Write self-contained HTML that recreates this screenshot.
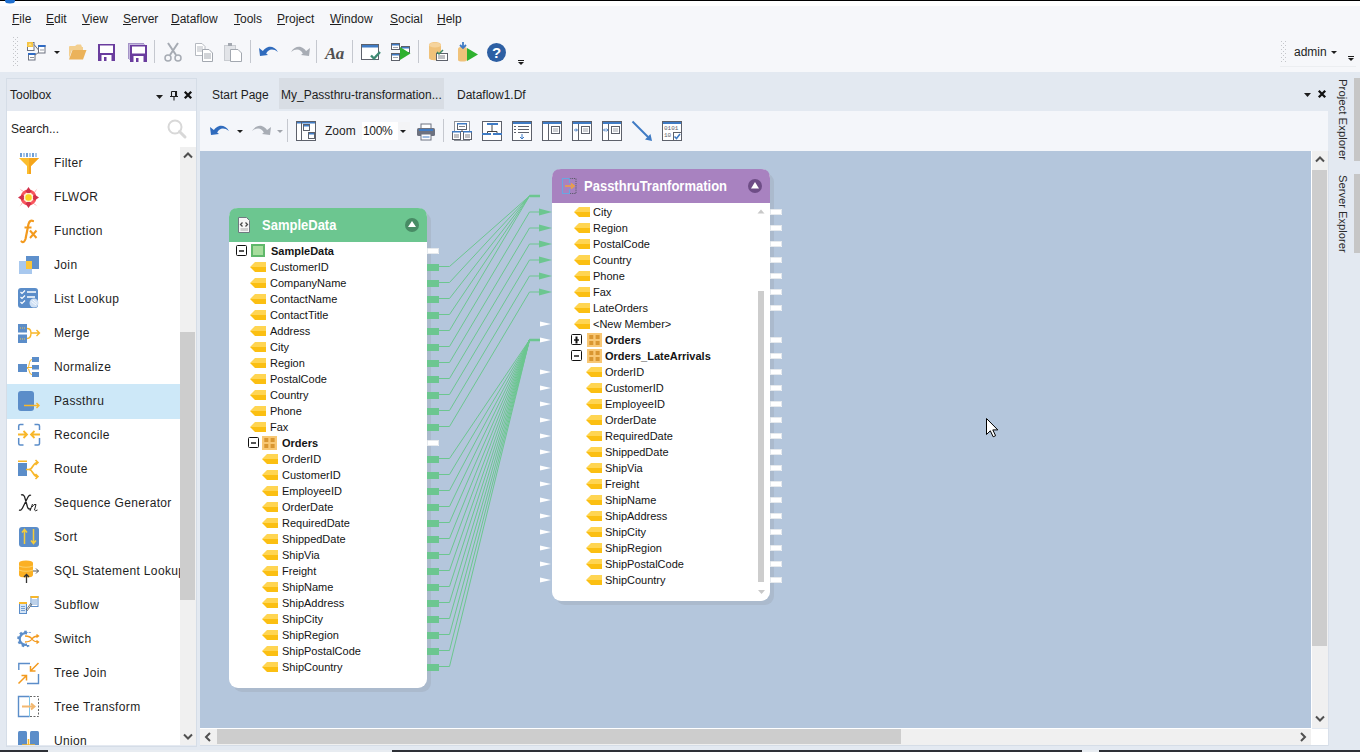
<!DOCTYPE html><html><head><meta charset="utf-8"><style>
*{margin:0;padding:0;box-sizing:border-box}
html,body{width:1360px;height:752px;overflow:hidden;background:#e3e9f1;font-family:"Liberation Sans",sans-serif;font-size:12px;color:#1e1e1e}
.a{position:absolute}
.mi{position:absolute;top:12px;font-size:12px;color:#1e1e1e;white-space:nowrap}
.mi u{text-decoration:underline;text-underline-offset:1px}
.sep{position:absolute;width:1px;background:#c5c8cf}
svg{position:absolute;overflow:visible}
.it{position:absolute;left:7px;width:173px;height:34px}
.it .t{position:absolute;left:47px;top:11px;font-size:12px;color:#1e1e1e;white-space:nowrap;letter-spacing:0.35px}
.f{position:absolute;white-space:nowrap;font-size:11px;line-height:16px;height:16px;color:#141414}
.fb{font-weight:bold}
</style></head><body>
<div class="a" style="left:0;top:0;width:1360px;height:72px;background:#f6f7fa"></div>
<div class="a" style="left:0;top:0;width:1360px;height:1px;background:#000"></div>
<div class="a" style="left:0;top:1px;width:1360px;height:5px;background:#fff"></div>
<svg style="left:5px;top:1px" width="12" height="4"><ellipse cx="5" cy="0" rx="5" ry="2.5" fill="#1f6fd0"/></svg>
<div class="mi" style="left:12px"><u>F</u>ile</div>
<div class="mi" style="left:46px"><u>E</u>dit</div>
<div class="mi" style="left:82px"><u>V</u>iew</div>
<div class="mi" style="left:123px"><u>S</u>erver</div>
<div class="mi" style="left:171px"><u>D</u>ataflow</div>
<div class="mi" style="left:234px"><u>T</u>ools</div>
<div class="mi" style="left:277px"><u>P</u>roject</div>
<div class="mi" style="left:330px"><u>W</u>indow</div>
<div class="mi" style="left:390px"><u>S</u>ocial</div>
<div class="mi" style="left:437px"><u>H</u>elp</div>
<svg style="left:13px;top:37px" width="5" height="32"><rect x="0" y="0" width="1" height="1" fill="#c4c6ca"/><rect x="4" y="0" width="1" height="1" fill="#c4c6ca"/><rect x="2" y="2" width="1" height="1" fill="#c4c6ca"/><rect x="0" y="4" width="1" height="1" fill="#c4c6ca"/><rect x="4" y="4" width="1" height="1" fill="#c4c6ca"/><rect x="2" y="6" width="1" height="1" fill="#c4c6ca"/><rect x="0" y="8" width="1" height="1" fill="#c4c6ca"/><rect x="4" y="8" width="1" height="1" fill="#c4c6ca"/><rect x="2" y="10" width="1" height="1" fill="#c4c6ca"/><rect x="0" y="12" width="1" height="1" fill="#c4c6ca"/><rect x="4" y="12" width="1" height="1" fill="#c4c6ca"/><rect x="2" y="14" width="1" height="1" fill="#c4c6ca"/><rect x="0" y="16" width="1" height="1" fill="#c4c6ca"/><rect x="4" y="16" width="1" height="1" fill="#c4c6ca"/><rect x="2" y="18" width="1" height="1" fill="#c4c6ca"/><rect x="0" y="20" width="1" height="1" fill="#c4c6ca"/><rect x="4" y="20" width="1" height="1" fill="#c4c6ca"/><rect x="2" y="22" width="1" height="1" fill="#c4c6ca"/><rect x="0" y="24" width="1" height="1" fill="#c4c6ca"/><rect x="4" y="24" width="1" height="1" fill="#c4c6ca"/><rect x="2" y="26" width="1" height="1" fill="#c4c6ca"/><rect x="0" y="28" width="1" height="1" fill="#c4c6ca"/><rect x="4" y="28" width="1" height="1" fill="#c4c6ca"/></svg>
<svg style="left:26px;top:41px" width="21" height="21" viewBox="0 0 21 21">
<rect x="1.5" y="1.5" width="6.5" height="8" fill="#fff" stroke="#6d7280"/><rect x="1" y="1" width="6" height="5" fill="#f6c443"/><path d="M2 4.5L4 2L6 4.5Z" fill="#fbe38a"/>
<rect x="12.5" y="4.5" width="6.5" height="7.5" fill="#fff" stroke="#6d7280"/><rect x="12" y="4" width="7.5" height="2" fill="#2f6bc4"/><rect x="14" y="8" width="4" height="2" fill="#c9ccd2"/>
<rect x="2.5" y="12.5" width="6.5" height="6.5" fill="#fff" stroke="#6d7280"/><rect x="2" y="12" width="7.5" height="2" fill="#2f6bc4"/><path d="M4 16.5h4" stroke="#8a8e96"/>
<path d="M8 3.5 L12.5 9 M12.5 11.5 L9 14" stroke="#6d7280" fill="none"/></svg>
<svg style="left:54px;top:51px" width="6" height="4"><path d="M0 0H6L3 3Z" fill="#1e1e1e"/></svg>
<svg style="left:68px;top:44px" width="19" height="17" viewBox="0 0 19 17"><path d="M1 3 Q1 2 2 2 H7 L9 0.5 H13 L14 3 H15 V6 H4 L1 14 Z" fill="#f3cf8f"/><path d="M4.5 6 H18.5 L15 15.5 H1 Z" fill="#ebb25a"/></svg>
<svg style="left:98px;top:44px" width="18" height="18" viewBox="0 0 18 18"><rect x="0" y="0" width="17" height="17" fill="#6a3d9e"/><rect x="2" y="1.5" width="13" height="7.5" fill="#fff"/><rect x="3.5" y="11" width="10" height="6" fill="#fff"/><rect x="6" y="13" width="2.5" height="4" fill="#6a3d9e"/></svg>
<svg style="left:128px;top:43px" width="19" height="19" viewBox="0 0 19 19"><rect x="0" y="0" width="16" height="16" fill="#a594c8"/><rect x="1" y="1" width="16" height="16" fill="#c5b9de"/><rect x="2" y="2" width="17" height="17" fill="#6a3d9e"/><rect x="4" y="3.5" width="13" height="7" fill="#fff"/><rect x="5.5" y="13" width="10" height="6" fill="#fff"/><rect x="8" y="15" width="2.5" height="4" fill="#6a3d9e"/></svg>
<div class="sep" style="left:154px;top:40px;height:23px"></div>
<svg style="left:164px;top:42px" width="18" height="20" viewBox="0 0 18 20"><path d="M4 1 L12 13 M14 1 L6 13" stroke="#a6abb3" stroke-width="2" fill="none"/><circle cx="4" cy="16" r="3" fill="none" stroke="#a6abb3" stroke-width="1.5"/><circle cx="14" cy="16" r="3" fill="none" stroke="#a6abb3" stroke-width="1.5"/></svg>
<svg style="left:195px;top:43px" width="18" height="19" viewBox="0 0 18 19"><path d="M0.5 0.5 H7 L10 3.5 V12.5 H0.5 Z" fill="#fff" stroke="#b5b9c0"/><path d="M2 4h6M2 6h6M2 8h6" stroke="#b5b9c0"/><path d="M7.5 6.5 H14 L17.5 10 V18.5 H7.5 Z" fill="#fff" stroke="#a3a8b0"/><path d="M9 11h7M9 13h7M9 15h7" stroke="#a3a8b0"/></svg>
<svg style="left:224px;top:43px" width="18" height="19" viewBox="0 0 18 19"><rect x="0.5" y="2.5" width="11" height="15" fill="#e2e4e8" stroke="#c9ccd1"/><rect x="4" y="0" width="4" height="3" fill="#a3a8b0"/><path d="M6.5 6.5 H14 L17.5 10 V18.5 H6.5 Z" fill="#fff" stroke="#a3a8b0"/></svg>
<div class="sep" style="left:250px;top:40px;height:23px"></div>
<svg style="left:259px;top:44px" width="20" height="13" viewBox="0 0 20 13"><path d="M3 9 C6 2 14 0 19 8 C14 4 9 5 7 10 Z" fill="#2f6bbd"/><path d="M0 4 L9 11 L1 12 Z" fill="#2f6bbd"/></svg>
<svg style="left:290px;top:44px" width="20" height="13" viewBox="0 0 20 13"><path d="M17 9 C14 2 6 0 1 8 C6 4 11 5 13 10 Z" fill="#a8adb5"/><path d="M20 4 L11 11 L19 12 Z" fill="#a8adb5"/></svg>
<div class="sep" style="left:316px;top:40px;height:23px"></div>
<div class="a" style="left:325px;top:44px;font-family:'Liberation Serif',serif;font-style:italic;font-weight:bold;font-size:17px;color:#505050;letter-spacing:-0.5px">Aa</div>
<div class="sep" style="left:352px;top:40px;height:23px"></div>
<svg style="left:361px;top:44px" width="20" height="17" viewBox="0 0 20 17"><rect x="0.5" y="0.5" width="17" height="15" fill="#fff" stroke="#5d616b"/><rect x="1" y="1" width="16" height="2.5" fill="#3f7bc4"/><path d="M10 11.5 L13 14.5 L19 8" stroke="#3d8a72" stroke-width="2.4" fill="none"/></svg>
<svg style="left:391px;top:43px" width="20" height="18" viewBox="0 0 20 18"><rect x="0.5" y="0.5" width="8" height="6" fill="#fff" stroke="#5d616b"/><rect x="1" y="1" width="7" height="1.5" fill="#3f7bc4"/><path d="M2 4.5h5" stroke="#8a8e96" stroke-width="0.8"/><rect x="10.5" y="3.5" width="8" height="6" fill="#fff" stroke="#5d616b"/><rect x="11" y="4" width="7" height="1.5" fill="#3f7bc4"/><rect x="0.5" y="10.5" width="8" height="7" fill="#fff" stroke="#5d616b"/><rect x="1" y="11" width="7" height="1.5" fill="#3f7bc4"/><path d="M2 14.5h5" stroke="#8a8e96" stroke-width="0.8"/><path d="M9 4 L19.5 10.5 L9 17 Z" fill="#2fb12f"/></svg>
<div class="sep" style="left:418px;top:40px;height:23px"></div>
<svg style="left:429px;top:42px" width="19" height="20" viewBox="0 0 19 20"><path d="M0 3 C0 -1 12 -1 12 3 V16 C12 19 0 19 0 16 Z" fill="#f0c27a"/><ellipse cx="6" cy="3" rx="6" ry="2.5" fill="#f6d49d"/><rect x="7.5" y="11.5" width="11" height="7" fill="#fff" stroke="#5d616b"/><path d="M9 14h7M9 16h7" stroke="#5d616b" stroke-width="0.8"/><path d="M8 10 L10 12 L14 8" stroke="#3d8a66" stroke-width="1.5" fill="none"/></svg>
<svg style="left:458px;top:42px" width="20" height="20" viewBox="0 0 20 20"><path d="M0 7 C0 4 9 4 9 7 V18 C9 20 0 20 0 18 Z" fill="#f0c27a"/><path d="M5 0 V5 M2 3 L5 6 L8 3" stroke="#3f7bc4" stroke-width="1.8" fill="none"/><path d="M9 6 L20 12.5 L9 19 Z" fill="#2fb12f"/></svg>
<svg style="left:487px;top:43px" width="19" height="19" viewBox="0 0 19 19"><circle cx="9.5" cy="9.5" r="9.5" fill="#2d5fa3"/><text x="9.5" y="15" text-anchor="middle" font-family="Liberation Sans" font-weight="bold" font-size="15" fill="#fff">?</text></svg>
<svg style="left:518px;top:60px" width="7" height="7"><rect x="0" y="0" width="6" height="1" fill="#1e1e1e"/><path d="M0 2H6L3 5Z" fill="#1e1e1e"/></svg>
<svg style="left:1281px;top:41px" width="5" height="24"><rect x="0" y="0" width="1" height="1" fill="#c4c6ca"/><rect x="4" y="0" width="1" height="1" fill="#c4c6ca"/><rect x="2" y="2" width="1" height="1" fill="#c4c6ca"/><rect x="0" y="4" width="1" height="1" fill="#c4c6ca"/><rect x="4" y="4" width="1" height="1" fill="#c4c6ca"/><rect x="2" y="6" width="1" height="1" fill="#c4c6ca"/><rect x="0" y="8" width="1" height="1" fill="#c4c6ca"/><rect x="4" y="8" width="1" height="1" fill="#c4c6ca"/><rect x="2" y="10" width="1" height="1" fill="#c4c6ca"/><rect x="0" y="12" width="1" height="1" fill="#c4c6ca"/><rect x="4" y="12" width="1" height="1" fill="#c4c6ca"/><rect x="2" y="14" width="1" height="1" fill="#c4c6ca"/><rect x="0" y="16" width="1" height="1" fill="#c4c6ca"/><rect x="4" y="16" width="1" height="1" fill="#c4c6ca"/><rect x="2" y="18" width="1" height="1" fill="#c4c6ca"/><rect x="0" y="20" width="1" height="1" fill="#c4c6ca"/><rect x="4" y="20" width="1" height="1" fill="#c4c6ca"/></svg>
<div class="a" style="left:1280px;top:66px;width:76px;height:1px;background:#eceef1"></div>
<div class="a" style="left:1294px;top:45px;font-size:12px;color:#1e1e1e">admin</div>
<svg style="left:1331px;top:51px" width="6" height="4"><path d="M0 0H6L3 3Z" fill="#1e1e1e"/></svg>
<svg style="left:1348px;top:56px" width="7" height="7"><rect x="0" y="0" width="6" height="1" fill="#1e1e1e"/><path d="M0 2H6L3 5Z" fill="#1e1e1e"/></svg>
<div class="a" style="left:6px;top:78px;width:191px;height:669px;border:1px solid #d5dde7;background:#e4e9f1"></div>
<div class="a" style="left:10px;top:88px;font-size:12px;color:#1e1e1e">Toolbox</div>
<svg style="left:156px;top:95px" width="8" height="5"><path d="M0 0H7L3.5 4Z" fill="#1e1e1e"/></svg>
<svg style="left:170px;top:91px" width="8" height="10"><path d="M1.5 0.5H6.5V5.5M1.5 0.5V5.5M0 5.5H8M4 5.5V9.5" stroke="#1e1e1e" stroke-width="1.1" fill="none"/><rect x="5" y="0.5" width="1.5" height="5" fill="#1e1e1e"/></svg>
<svg style="left:184px;top:91px" width="8" height="8"><path d="M0.8 0.8L7.2 7.2M7.2 0.8L0.8 7.2" stroke="#111" stroke-width="2.3"/></svg>
<div class="a" style="left:7px;top:111px;width:189px;height:36px;background:#fff"></div>
<div class="a" style="left:11px;top:122px;font-size:12px;color:#1e1e1e">Search...</div>
<svg style="left:166px;top:118px" width="22" height="22"><circle cx="9" cy="9" r="6.5" fill="none" stroke="#d8d8d8" stroke-width="2"/><path d="M13.5 13.5L19 19" stroke="#d8d8d8" stroke-width="3" stroke-linecap="round"/></svg>
<div class="a" style="left:7px;top:147px;width:173px;height:598px;background:#fff;overflow:hidden">
<div class="it" style="left:0;top:-2px"><div class="t">Filter</div></div>
<div class="it" style="left:0;top:32px"><div class="t">FLWOR</div></div>
<div class="it" style="left:0;top:66px"><div class="t">Function</div></div>
<div class="it" style="left:0;top:100px"><div class="t">Join</div></div>
<div class="it" style="left:0;top:134px"><div class="t">List Lookup</div></div>
<div class="it" style="left:0;top:168px"><div class="t">Merge</div></div>
<div class="it" style="left:0;top:202px"><div class="t">Normalize</div></div>
<div class="a" style="left:0;top:237px;width:173px;height:35px;background:#cde8f8"></div>
<div class="it" style="left:0;top:236px"><div class="t">Passthru</div></div>
<div class="it" style="left:0;top:270px"><div class="t">Reconcile</div></div>
<div class="it" style="left:0;top:304px"><div class="t">Route</div></div>
<div class="it" style="left:0;top:338px"><div class="t">Sequence Generator</div></div>
<div class="it" style="left:0;top:372px"><div class="t">Sort</div></div>
<div class="it" style="left:0;top:406px"><div class="t">SQL Statement Lookup</div></div>
<div class="it" style="left:0;top:440px"><div class="t">Subflow</div></div>
<div class="it" style="left:0;top:474px"><div class="t">Switch</div></div>
<div class="it" style="left:0;top:508px"><div class="t">Tree Join</div></div>
<div class="it" style="left:0;top:542px"><div class="t">Tree Transform</div></div>
<div class="it" style="left:0;top:576px"><div class="t">Union</div></div>
<svg style="left:-7px;top:-147px" width="200" height="752"><rect x="20" y="153" width="18" height="4" fill="#fff"/><rect x="20" y="153" width="2" height="4" fill="#6f9fd6"/><rect x="23" y="153" width="2" height="4" fill="#a7c7ea"/><rect x="26" y="153" width="2" height="4" fill="#6f9fd6"/><rect x="29" y="153" width="2" height="4" fill="#a7c7ea"/><rect x="32" y="153" width="2" height="4" fill="#6f9fd6"/><rect x="35" y="153" width="2" height="4" fill="#a7c7ea"/><path d="M19 158H39L31 166V174H27V166Z" fill="#fbbd2e"/><path d="M29 158H39L31 166V174H29Z" fill="#f5a51c"/><g transform="translate(28.5,197.5)"><path d="M-6.5 -6.5L-9 -9L-3 -5ZM6.5 -6.5L9 -9L5 -3ZM6.5 6.5L9 9L3 5ZM-6.5 6.5L-9 9L-5 3Z" fill="#f4a0a0"/><circle r="6.5" fill="none" stroke="#f8575d" stroke-width="3"/><path d="M0 -10.5L3 -6L0 -3.5L-3 -6ZM0 10.5L3 6L0 3.5L-3 6ZM-10.5 0L-6 3L-3.5 0L-6 -3ZM10.5 0L6 3L3.5 0L6 -3Z" fill="#d2304a"/><circle r="4.6" fill="#fdf1c8"/><circle r="3.2" fill="#fbd321"/></g><path d="M21.5 241.5Q24 243.5 25.5 239L28.5 224Q30 219.5 33 221" stroke="#f39a1e" stroke-width="2.2" fill="none" stroke-linecap="round"/><path d="M24.5 227.5H31.5" stroke="#f39a1e" stroke-width="2"/><path d="M30 230.5L36.5 238M36.5 230.5L30 238" stroke="#f39a1e" stroke-width="2"/><rect x="26" y="256" width="13" height="13" fill="#5e90cc"/><rect x="19" y="261" width="13" height="13" fill="#a8c8ee"/><rect x="26" y="261" width="6" height="8" fill="#fac53a"/><rect x="18" y="288" width="20" height="20" rx="3" fill="#5b8dc9"/><path d="M20.5 292L22 293.5L25 290.5M20.5 297L22 298.5L25 295.5M20.5 302L22 303.5L25 300.5" stroke="#fff" stroke-width="1.2" fill="none"/><path d="M27 292H36M27 297H35" stroke="#fff" stroke-width="1.4"/><circle cx="34" cy="303" r="4.5" fill="#cfe0f4"/><path d="M31.5 301.5L36 305M33 300L37 303.5" stroke="#fff" stroke-width="0.8"/><rect x="18" y="324" width="9" height="8.5" fill="#5b8dc9"/><rect x="18" y="334.5" width="9" height="8.5" fill="#5b8dc9"/><path d="M20 328h5M20 339h5" stroke="#f3c24a" stroke-width="1" stroke-dasharray="1 1"/><path d="M27 328.5Q31 328.5 31 333Q31 338.5 27 338.5M31 333H39.5M36.5 330L39.5 333L36.5 336" stroke="#f8b72a" stroke-width="1.4" fill="none"/><rect x="18" y="364" width="9" height="8" fill="#5b8dc9"/><rect x="32" y="357" width="7" height="5" fill="#5b8dc9"/><rect x="32" y="365" width="7" height="4.5" fill="#5b8dc9"/><rect x="32" y="372" width="7" height="5" fill="#5b8dc9"/><path d="M27 368Q29 368 29.5 362.5Q30 359.5 32 359.5M27 367.5H32M27 368Q29 368 29.5 372Q30 374.5 32 374.5" stroke="#f8b72a" stroke-width="1" fill="none"/><rect x="18" y="391" width="16" height="20" rx="3" fill="#5b8dc9"/><path d="M24 405.5H39M36.5 403L39 405.5L36.5 408" stroke="#f8b72a" stroke-width="1.4" fill="none"/><path d="M18.7 430V426Q18.7 424.5 20.2 424.5H23.5M34.5 424.5H38Q39.5 424.5 39.5 426V430M39.5 438V443.5Q39.5 445 38 445H34.5M23.5 445H20.2Q18.7 445 18.7 443.5V438" stroke="#5b8dc9" stroke-width="1.5" fill="none"/><path d="M18 434.5H26.5M23.5 431L27 434.5L23.5 438M40 434.5H31.5M34.5 431L31 434.5L34.5 438" stroke="#f8b72a" stroke-width="1.8" fill="none"/><rect x="18" y="463" width="9" height="13" fill="#5b8dc9"/><rect x="18" y="460.5" width="9" height="1.5" fill="#f8b72a"/><path d="M26 469.5H29Q31 469.5 33 466Q35 462.5 37.5 462.5M29 469.5Q31 469.5 33 473Q35 476.5 37.5 476.5M35.5 460L38 462.5L35.5 465M35.5 474L38 476.5L35.5 479" stroke="#f8b72a" stroke-width="1.6" fill="none"/><path d="M19 510Q21 511 22.5 508L28 497Q29.5 494.5 31 495.5M21 495Q23 494 24.5 496.5L27.5 507Q28.5 510 31 508.5" stroke="#222" stroke-width="1.3" fill="none"/><path d="M30 511L32.5 504M32 507Q34 503.5 36 504.5L34.5 510Q35 511.5 37.5 510" stroke="#222" stroke-width="1" fill="none"/><rect x="19" y="527" width="20" height="20" rx="3" fill="#5b8dc9"/><path d="M24.5 544V530M22 532.5L24.5 529.5L27 532.5M33.5 529V543M31 540.5L33.5 543.5L36 540.5" stroke="#f5cc3a" stroke-width="1.5" fill="none"/><path d="M19 563Q19 560.5 26 560.5Q33 560.5 33 563V575Q33 577.5 26 577.5Q19 577.5 19 575Z" fill="#fbb024"/><path d="M19 566Q26 568.5 33 566M19 570Q26 572.5 33 570" stroke="#fbd06a" stroke-width="1.2" fill="none"/><path d="M26.5 583V574.5M24 577L26.5 574.5L29 577" stroke="#333" stroke-width="1.3" fill="none"/><path d="M33 571H38.5M36 568.5L38.5 571L36 573.5" stroke="#555" stroke-width="1" fill="none"/><rect x="19.5" y="602.5" width="7" height="11" fill="#d6e5f5" stroke="#5b8dc9"/><rect x="19" y="602" width="8" height="2" fill="#f8b72a"/><path d="M21 606.5h4M21 608.5h4M21 610.5h4" stroke="#5b8dc9" stroke-width="0.8"/><rect x="31" y="596.5" width="7" height="10" fill="#fff" stroke="#5b8dc9"/><rect x="30.5" y="596" width="8" height="2" fill="#f8b72a"/><path d="M32 600h5M32 602h5M32 604h5" stroke="#5b8dc9" stroke-width="0.8"/><path d="M26 610L31 603M27 611L32 604" stroke="#444" stroke-width="0.7"/><g transform="translate(25.5,639)"><circle r="5.8" fill="none" stroke="#5b8dc9" stroke-width="2.2"/><rect x="-1.3" y="-8.3" width="2.6" height="3" fill="#5b8dc9" transform="rotate(0)"/><rect x="-1.3" y="-8.3" width="2.6" height="3" fill="#5b8dc9" transform="rotate(40)"/><rect x="-1.3" y="-8.3" width="2.6" height="3" fill="#5b8dc9" transform="rotate(80)"/><rect x="-1.3" y="-8.3" width="2.6" height="3" fill="#5b8dc9" transform="rotate(120)"/><rect x="-1.3" y="-8.3" width="2.6" height="3" fill="#5b8dc9" transform="rotate(160)"/><rect x="-1.3" y="-8.3" width="2.6" height="3" fill="#5b8dc9" transform="rotate(200)"/><rect x="-1.3" y="-8.3" width="2.6" height="3" fill="#5b8dc9" transform="rotate(240)"/><rect x="-1.3" y="-8.3" width="2.6" height="3" fill="#5b8dc9" transform="rotate(280)"/><rect x="-1.3" y="-8.3" width="2.6" height="3" fill="#5b8dc9" transform="rotate(320)"/></g><rect x="27" y="633" width="13" height="12" fill="#fff"/><path d="M25 636Q30 636 32 639Q34 642 38.5 642M25 642Q30 642 32 639Q34 636 38.5 636M36.5 634.5L38.5 636L36.5 637.5M36.5 640.5L38.5 642L36.5 643.5" stroke="#f39a1e" stroke-width="1.3" fill="none"/><path d="M18.8 670V663.5H30M38.5 674V683.5H27" stroke="#5b8dc9" stroke-width="1.4" fill="none"/><path d="M38.5 663L31 670.5M30.5 666V671H35.5M18.5 683.5L26 676M21.5 675.5H26.5V680.5" stroke="#f39a1e" stroke-width="1.5" fill="none"/><path d="M29.5 696.5H18.5V716.5H29.5" stroke="#5b8dc9" stroke-width="1.4" fill="none"/><path d="M29.5 696.5V716.5" stroke="#7fc4e8" stroke-width="1"/><path d="M30 696.5H38.5V716.5H30" stroke="#666" stroke-width="1" stroke-dasharray="2 1.5" fill="none"/><path d="M22 706.5H33M31 703.5L34.5 706.5L31 709.5" stroke="#f3b870" stroke-width="2" fill="none"/><rect x="18" y="731" width="9" height="18" rx="1.5" fill="#5b8dc9"/><rect x="30" y="731" width="9" height="18" rx="1.5" fill="#5b8dc9"/><path d="M28.5 739V745M22 745H35" stroke="#f8b72a" stroke-width="1.6"/></svg>
</div>
<div class="a" style="left:180px;top:147px;width:16px;height:598px;background:#f0f0f0"></div>
<div class="a" style="left:180px;top:332px;width:15px;height:268px;background:#cdcdcd"></div>
<svg style="left:183px;top:152px" width="10" height="7"><path d="M1 5.5L5 1.5L9 5.5" stroke="#505050" stroke-width="2" fill="none"/></svg>
<svg style="left:183px;top:733px" width="10" height="7"><path d="M1 1.5L5 5.5L9 1.5" stroke="#505050" stroke-width="2" fill="none"/></svg>
<div class="a" style="left:279px;top:78px;width:165px;height:31px;background:#d8dde4"></div>
<div class="a" style="left:212px;top:88px;font-size:12px;color:#1e1e1e">Start Page</div>
<div class="a" style="left:281px;top:88px;font-size:12px;color:#1e1e1e">My_Passthru-transformation...</div>
<div class="a" style="left:457px;top:88px;font-size:12px;color:#1e1e1e">Dataflow1.Df</div>
<svg style="left:1304px;top:93px" width="8" height="5"><path d="M0 0H7L3.5 4Z" fill="#1e1e1e"/></svg>
<svg style="left:1318px;top:90px" width="8" height="8"><path d="M0.8 0.8L7.2 7.2M7.2 0.8L0.8 7.2" stroke="#111" stroke-width="2.3"/></svg>
<div class="a" style="left:200px;top:111px;width:1128px;height:40px;background:#f4f6fa"></div>
<svg style="left:210px;top:123px" width="20" height="13" viewBox="0 0 20 13"><path d="M3 9 C6 2 14 0 19 8 C14 4 9 5 7 10 Z" fill="#2f6bbd"/><path d="M0 4 L9 11 L1 12 Z" fill="#2f6bbd"/></svg>
<svg style="left:237px;top:130px" width="6" height="4"><path d="M0 0H6L3 3Z" fill="#1e1e1e"/></svg>
<svg style="left:251px;top:123px" width="20" height="13" viewBox="0 0 20 13"><path d="M17 9 C14 2 6 0 1 8 C6 4 11 5 13 10 Z" fill="#a8adb5"/><path d="M20 4 L11 11 L19 12 Z" fill="#a8adb5"/></svg>
<svg style="left:277px;top:130px" width="6" height="4"><path d="M0 0H6L3 3Z" fill="#a0a4ab"/></svg>
<div class="sep" style="left:287px;top:119px;height:23px"></div>
<svg style="left:296px;top:121px" width="20" height="20" viewBox="0 0 20 20"><rect x="0.5" y="0.5" width="19" height="19" fill="#fff" stroke="#5d616b"/><rect x="1" y="1" width="18" height="1.5" fill="#3f7bc4"/><path d="M5.5 1V19" stroke="#5d616b"/><rect x="7.5" y="3.5" width="6" height="6" fill="#fff" stroke="#5d616b"/><rect x="8" y="4" width="5" height="1.5" fill="#3f7bc4"/><rect x="12.5" y="11.5" width="6" height="6" fill="#fff" stroke="#5d616b"/><rect x="13" y="12" width="5" height="1.5" fill="#3f7bc4"/></svg>
<div class="a" style="left:325px;top:124px;font-size:12px;color:#1e1e1e">Zoom</div>
<div class="a" style="left:362px;top:122px;width:48px;height:18px;background:#fff"></div>
<div class="a" style="left:398px;top:122px;width:12px;height:18px;background:#f3f4f6"></div>
<div class="a" style="left:363px;top:124px;font-size:12px;color:#1e1e1e;letter-spacing:-0.3px">100%</div>
<svg style="left:400px;top:130px" width="6" height="4"><path d="M0 0H6L3 3Z" fill="#1e1e1e"/></svg>
<svg style="left:417px;top:124px" width="18" height="16" viewBox="0 0 18 16"><rect x="4" y="0" width="10" height="5" fill="#fff" stroke="#6d7280"/><rect x="0" y="4" width="18" height="8" rx="1.5" fill="#6d7280"/><rect x="2" y="5" width="14" height="2" fill="#3f7bc4"/><rect x="4" y="10" width="10" height="6" fill="#fff" stroke="#6d7280"/><path d="M5.5 13H12.5" stroke="#3f7bc4"/></svg>
<div class="sep" style="left:443px;top:119px;height:23px"></div>
<svg style="left:452px;top:121px" width="20" height="20" viewBox="0 0 20 20"><rect x="2.5" y="0.5" width="15" height="19" fill="#fff" stroke="#8e9299"/><rect x="5.5" y="2.5" width="9" height="6" fill="#fff" stroke="#5d616b"/><rect x="5" y="2" width="10" height="1.5" fill="#3f7bc4"/><path d="M7 5.5h6" stroke="#5d616b" stroke-width="0.8"/><path d="M10 8.5V10M5 12V10.5H15V12" stroke="#5d616b" fill="none"/><rect x="0.5" y="10.5" width="8" height="8" fill="#fff" stroke="#5d616b"/><rect x="0" y="10" width="9" height="1.5" fill="#3f7bc4"/><path d="M2 14h5M2 16h5" stroke="#5d616b" stroke-width="0.8"/><rect x="11.5" y="10.5" width="8" height="8" fill="#fff" stroke="#5d616b"/><rect x="11" y="10" width="9" height="1.5" fill="#3f7bc4"/><path d="M13 14h5M13 16h5" stroke="#5d616b" stroke-width="0.8"/></svg>
<svg style="left:482px;top:121px" width="20" height="20" viewBox="0 0 20 20"><rect x="0.5" y="0.5" width="19" height="19" fill="#fff" stroke="#5d616b"/><rect x="5" y="2" width="11" height="2" fill="#3f7bc4"/><path d="M10 4V10M5.5 12V10.5H15V12" stroke="#444" fill="none"/><rect x="0" y="12" width="9" height="2" fill="#3f7bc4"/><rect x="11" y="12" width="9" height="2" fill="#3f7bc4"/></svg>
<svg style="left:512px;top:121px" width="20" height="20" viewBox="0 0 20 20"><rect x="0.5" y="0.5" width="19" height="19" fill="#fff" stroke="#5d616b"/><rect x="1" y="1" width="18" height="2" fill="#3f7bc4"/><path d="M2 5.5h2M6 5.5h11M2 8.5h2M6 8.5h11M2 11.5h2M6 11.5h11" stroke="#5d616b" stroke-width="1"/><path d="M10 13V18M8 16L10 18L12 16" stroke="#3f7bc4" fill="none"/></svg>
<svg style="left:542px;top:121px" width="20" height="20" viewBox="0 0 20 20"><rect x="0.5" y="0.5" width="19" height="19" fill="#fff" stroke="#5d616b"/><rect x="1" y="1" width="18" height="2" fill="#3f7bc4"/><path d="M6.5 3V19" stroke="#5d616b"/><rect x="9.5" y="5.5" width="8" height="7" fill="#fff" stroke="#5d616b"/><path d="M11 8h5M11 10h5" stroke="#5d616b" stroke-width="0.6"/></svg>
<svg style="left:572px;top:121px" width="20" height="20" viewBox="0 0 20 20"><rect x="0.5" y="0.5" width="19" height="19" fill="#fff" stroke="#5d616b"/><rect x="1" y="1" width="18" height="2" fill="#3f7bc4"/><path d="M6.5 3V19" stroke="#5d616b"/><rect x="9.5" y="5.5" width="8" height="7" fill="#fff" stroke="#5d616b"/><path d="M11 8h5M11 10h5" stroke="#5d616b" stroke-width="0.6"/><path d="M2 9h3M4 7.5L5.5 9L4 10.5" stroke="#3f7bc4" fill="none"/></svg>
<svg style="left:602px;top:121px" width="20" height="20" viewBox="0 0 20 20"><rect x="0.5" y="0.5" width="19" height="19" fill="#fff" stroke="#5d616b"/><rect x="1" y="1" width="18" height="2" fill="#3f7bc4"/><path d="M6.5 3V19" stroke="#5d616b"/><rect x="9.5" y="5.5" width="8" height="7" fill="#fff" stroke="#5d616b"/><path d="M11 8h5M11 10h5" stroke="#5d616b" stroke-width="0.6"/><path d="M1.5 9h4.5M3 7.5L1.5 9L3 10.5M4.5 7.5L6 9L4.5 10.5" stroke="#3f7bc4" fill="none" stroke-width="0.8"/></svg>
<svg style="left:632px;top:121px" width="20" height="20" viewBox="0 0 20 20"><path d="M0.5 0.5L16 16" stroke="#3f7bc4" stroke-width="2"/><path d="M20 20L13 18.5L18.5 13Z" fill="#3f7bc4"/></svg>
<svg style="left:662px;top:121px" width="20" height="20" viewBox="0 0 20 20"><rect x="0.5" y="0.5" width="19" height="19" fill="#fff" stroke="#5d616b"/><rect x="1" y="1" width="18" height="2" fill="#3f7bc4"/><text x="2" y="9" font-family="Liberation Mono" font-size="6" fill="#5d616b">0101</text><text x="2" y="16" font-family="Liberation Mono" font-size="6" fill="#5d616b">10</text><path d="M11.5 11V19M11 11.5H19" stroke="#5d616b"/><path d="M12.5 15.5L14.5 17.5L18 13" stroke="#3f7bc4" stroke-width="1.5" fill="none"/></svg>
<div class="a" style="left:200px;top:151px;width:1111px;height:577px;background:#b4c6dc;overflow:hidden">
<div class="a" style="left:-200px;top:-151px;width:1360px;height:752px">
<svg style="left:0;top:0" width="1360" height="752"><rect x="233" y="212" width="198" height="480" rx="9" fill="#abbacd"/><rect x="229" y="208" width="198" height="480" rx="9" fill="#fff"/><path d="M229 242 V217 Q229 208 238 208 H418 Q427 208 427 217 V242 Z" fill="#6cc690"/><circle cx="412" cy="225" r="7" fill="#488c65"/><path d="M408 227 L412 221 L416 227 Z" fill="#fff"/><path d="M238.5 217.5 H246.5 L249.5 220.5 V232.5 H238.5 Z" fill="#f6f6f6" stroke="#6f7a80"/><path d="M242.5 222.5L240.5 224.5L242.5 226.5M245.5 222.5L247.5 224.5L245.5 226.5" stroke="#4a4a4a" fill="none" stroke-width="1.3"/><rect x="240.5" y="228" width="7.5" height="3" fill="#d0d0d0"/><rect x="236.5" y="245.5" width="10" height="10" rx="1" fill="#fff" stroke="#111"/><rect x="239" y="250" width="5" height="2" fill="#555"/><rect x="251" y="244" width="14" height="13" fill="#5fb86a"/><rect x="253" y="246" width="10" height="9" fill="#a6dd9c"/><rect x="427" y="248" width="12" height="6" fill="#fff"/><rect x="427.5" y="248.5" width="11" height="5" fill="none" stroke="#d4dae2" stroke-width="0.6"/><path d="M250 267 L255 262 H266 V267 Z" fill="#ffd552"/><path d="M250 267 L255 272 H266 V267 Z" fill="#fbbf12"/><rect x="427" y="264" width="12" height="7" fill="#6cc690"/><path d="M250 283 L255 278 H266 V283 Z" fill="#ffd552"/><path d="M250 283 L255 288 H266 V283 Z" fill="#fbbf12"/><rect x="427" y="280" width="12" height="7" fill="#6cc690"/><path d="M250 299 L255 294 H266 V299 Z" fill="#ffd552"/><path d="M250 299 L255 304 H266 V299 Z" fill="#fbbf12"/><rect x="427" y="296" width="12" height="7" fill="#6cc690"/><path d="M250 315 L255 310 H266 V315 Z" fill="#ffd552"/><path d="M250 315 L255 320 H266 V315 Z" fill="#fbbf12"/><rect x="427" y="312" width="12" height="7" fill="#6cc690"/><path d="M250 331 L255 326 H266 V331 Z" fill="#ffd552"/><path d="M250 331 L255 336 H266 V331 Z" fill="#fbbf12"/><rect x="427" y="328" width="12" height="7" fill="#6cc690"/><path d="M250 347 L255 342 H266 V347 Z" fill="#ffd552"/><path d="M250 347 L255 352 H266 V347 Z" fill="#fbbf12"/><rect x="427" y="344" width="12" height="7" fill="#6cc690"/><path d="M250 363 L255 358 H266 V363 Z" fill="#ffd552"/><path d="M250 363 L255 368 H266 V363 Z" fill="#fbbf12"/><rect x="427" y="360" width="12" height="7" fill="#6cc690"/><path d="M250 379 L255 374 H266 V379 Z" fill="#ffd552"/><path d="M250 379 L255 384 H266 V379 Z" fill="#fbbf12"/><rect x="427" y="376" width="12" height="7" fill="#6cc690"/><path d="M250 395 L255 390 H266 V395 Z" fill="#ffd552"/><path d="M250 395 L255 400 H266 V395 Z" fill="#fbbf12"/><rect x="427" y="392" width="12" height="7" fill="#6cc690"/><path d="M250 411 L255 406 H266 V411 Z" fill="#ffd552"/><path d="M250 411 L255 416 H266 V411 Z" fill="#fbbf12"/><rect x="427" y="408" width="12" height="7" fill="#6cc690"/><path d="M250 427 L255 422 H266 V427 Z" fill="#ffd552"/><path d="M250 427 L255 432 H266 V427 Z" fill="#fbbf12"/><rect x="427" y="424" width="12" height="7" fill="#6cc690"/><rect x="248.5" y="437.5" width="10" height="10" rx="1" fill="#fff" stroke="#111"/><rect x="251" y="442" width="5" height="2" fill="#555"/><rect x="262" y="436" width="15" height="14" fill="#f8c774"/><rect x="264.3" y="438" width="4" height="4" fill="#d99631"/><rect x="270.6" y="438" width="4" height="4" fill="#d99631"/><rect x="264.3" y="444" width="4" height="4" fill="#d99631"/><rect x="270.6" y="444" width="4" height="4" fill="#d99631"/><rect x="427" y="440" width="12" height="6" fill="#fff"/><rect x="427.5" y="440.5" width="11" height="5" fill="none" stroke="#d4dae2" stroke-width="0.6"/><path d="M262 459 L267 454 H278 V459 Z" fill="#ffd552"/><path d="M262 459 L267 464 H278 V459 Z" fill="#fbbf12"/><rect x="427" y="456" width="12" height="7" fill="#6cc690"/><path d="M262 475 L267 470 H278 V475 Z" fill="#ffd552"/><path d="M262 475 L267 480 H278 V475 Z" fill="#fbbf12"/><rect x="427" y="472" width="12" height="7" fill="#6cc690"/><path d="M262 491 L267 486 H278 V491 Z" fill="#ffd552"/><path d="M262 491 L267 496 H278 V491 Z" fill="#fbbf12"/><rect x="427" y="488" width="12" height="7" fill="#6cc690"/><path d="M262 507 L267 502 H278 V507 Z" fill="#ffd552"/><path d="M262 507 L267 512 H278 V507 Z" fill="#fbbf12"/><rect x="427" y="504" width="12" height="7" fill="#6cc690"/><path d="M262 523 L267 518 H278 V523 Z" fill="#ffd552"/><path d="M262 523 L267 528 H278 V523 Z" fill="#fbbf12"/><rect x="427" y="520" width="12" height="7" fill="#6cc690"/><path d="M262 539 L267 534 H278 V539 Z" fill="#ffd552"/><path d="M262 539 L267 544 H278 V539 Z" fill="#fbbf12"/><rect x="427" y="536" width="12" height="7" fill="#6cc690"/><path d="M262 555 L267 550 H278 V555 Z" fill="#ffd552"/><path d="M262 555 L267 560 H278 V555 Z" fill="#fbbf12"/><rect x="427" y="552" width="12" height="7" fill="#6cc690"/><path d="M262 571 L267 566 H278 V571 Z" fill="#ffd552"/><path d="M262 571 L267 576 H278 V571 Z" fill="#fbbf12"/><rect x="427" y="568" width="12" height="7" fill="#6cc690"/><path d="M262 587 L267 582 H278 V587 Z" fill="#ffd552"/><path d="M262 587 L267 592 H278 V587 Z" fill="#fbbf12"/><rect x="427" y="584" width="12" height="7" fill="#6cc690"/><path d="M262 603 L267 598 H278 V603 Z" fill="#ffd552"/><path d="M262 603 L267 608 H278 V603 Z" fill="#fbbf12"/><rect x="427" y="600" width="12" height="7" fill="#6cc690"/><path d="M262 619 L267 614 H278 V619 Z" fill="#ffd552"/><path d="M262 619 L267 624 H278 V619 Z" fill="#fbbf12"/><rect x="427" y="616" width="12" height="7" fill="#6cc690"/><path d="M262 635 L267 630 H278 V635 Z" fill="#ffd552"/><path d="M262 635 L267 640 H278 V635 Z" fill="#fbbf12"/><rect x="427" y="632" width="12" height="7" fill="#6cc690"/><path d="M262 651 L267 646 H278 V651 Z" fill="#ffd552"/><path d="M262 651 L267 656 H278 V651 Z" fill="#fbbf12"/><rect x="427" y="648" width="12" height="7" fill="#6cc690"/><path d="M262 667 L267 662 H278 V667 Z" fill="#ffd552"/><path d="M262 667 L267 672 H278 V667 Z" fill="#fbbf12"/><rect x="427" y="664" width="12" height="7" fill="#6cc690"/><path d="M439 266.5 H449.5 L529.5 196 H540" stroke="#6cc690" stroke-width="1" fill="none"/><path d="M439 282.5 H449.5 L529.5 196 H540" stroke="#6cc690" stroke-width="1" fill="none"/><path d="M439 298.5 H449.5 L529.5 196 H540" stroke="#6cc690" stroke-width="1" fill="none"/><path d="M439 314.5 H449.5 L529.5 196 H540" stroke="#6cc690" stroke-width="1" fill="none"/><path d="M439 330.5 H449.5 L529.5 196 H540" stroke="#6cc690" stroke-width="1" fill="none"/><path d="M439 346.5 H449.5 L529.5 212 H540" stroke="#6cc690" stroke-width="1" fill="none"/><path d="M439 362.5 H449.5 L529.5 228 H540" stroke="#6cc690" stroke-width="1" fill="none"/><path d="M439 378.5 H449.5 L529.5 244 H540" stroke="#6cc690" stroke-width="1" fill="none"/><path d="M439 394.5 H449.5 L529.5 260 H540" stroke="#6cc690" stroke-width="1" fill="none"/><path d="M439 410.5 H449.5 L529.5 276 H540" stroke="#6cc690" stroke-width="1" fill="none"/><path d="M439 426.5 H449.5 L529.5 292 H540" stroke="#6cc690" stroke-width="1" fill="none"/><path d="M439 458.5 H449.5 L529.5 340 H540" stroke="#6cc690" stroke-width="1" fill="none"/><path d="M439 474.5 H449.5 L529.5 340 H540" stroke="#6cc690" stroke-width="1" fill="none"/><path d="M439 490.5 H449.5 L529.5 340 H540" stroke="#6cc690" stroke-width="1" fill="none"/><path d="M439 506.5 H449.5 L529.5 340 H540" stroke="#6cc690" stroke-width="1" fill="none"/><path d="M439 522.5 H449.5 L529.5 340 H540" stroke="#6cc690" stroke-width="1" fill="none"/><path d="M439 538.5 H449.5 L529.5 340 H540" stroke="#6cc690" stroke-width="1" fill="none"/><path d="M439 554.5 H449.5 L529.5 340 H540" stroke="#6cc690" stroke-width="1" fill="none"/><path d="M439 570.5 H449.5 L529.5 340 H540" stroke="#6cc690" stroke-width="1" fill="none"/><path d="M439 586.5 H449.5 L529.5 340 H540" stroke="#6cc690" stroke-width="1" fill="none"/><path d="M439 602.5 H449.5 L529.5 340 H540" stroke="#6cc690" stroke-width="1" fill="none"/><path d="M439 618.5 H449.5 L529.5 340 H540" stroke="#6cc690" stroke-width="1" fill="none"/><path d="M439 634.5 H449.5 L529.5 340 H540" stroke="#6cc690" stroke-width="1" fill="none"/><path d="M439 650.5 H449.5 L529.5 340 H540" stroke="#6cc690" stroke-width="1" fill="none"/><path d="M439 666.5 H449.5 L529.5 340 H540" stroke="#6cc690" stroke-width="1" fill="none"/><path d="M529.5 196 H540" stroke="#6cc690" stroke-width="2.5"/><path d="M529.5 340 H540" stroke="#6cc690" stroke-width="2.5"/><rect x="556" y="173" width="218" height="432" rx="9" fill="#abbacd"/><rect x="552" y="169" width="218" height="432" rx="9" fill="#fff"/><path d="M552 203 V178 Q552 169 561 169 H761 Q770 169 770 178 V203 Z" fill="#a882c0"/><circle cx="755" cy="186" r="7" fill="#6e4d86"/><path d="M751 188.5 L755 182 L759 188.5 Z" fill="#fff"/><path d="M569.5 178.5H576V193.5H569.5" fill="none" stroke="#5a5a6a" stroke-dasharray="1.2 1"/><path d="M569.5 178.5H562.5V193.5H569.5V189M569.5 183V178.5" fill="none" stroke="#6aa6e0" stroke-width="1.2"/><path d="M565 186H572M571 183.5L574 186L571 188.5" stroke="#f3a23a" stroke-width="1.6" fill="none"/><path d="M574 212 L579 207 H590 V212 Z" fill="#ffd552"/><path d="M574 212 L579 217 H590 V212 Z" fill="#fbbf12"/><path d="M574 228 L579 223 H590 V228 Z" fill="#ffd552"/><path d="M574 228 L579 233 H590 V228 Z" fill="#fbbf12"/><path d="M574 244 L579 239 H590 V244 Z" fill="#ffd552"/><path d="M574 244 L579 249 H590 V244 Z" fill="#fbbf12"/><path d="M574 260 L579 255 H590 V260 Z" fill="#ffd552"/><path d="M574 260 L579 265 H590 V260 Z" fill="#fbbf12"/><path d="M574 276 L579 271 H590 V276 Z" fill="#ffd552"/><path d="M574 276 L579 281 H590 V276 Z" fill="#fbbf12"/><path d="M574 292 L579 287 H590 V292 Z" fill="#ffd552"/><path d="M574 292 L579 297 H590 V292 Z" fill="#fbbf12"/><path d="M574 308 L579 303 H590 V308 Z" fill="#ffd552"/><path d="M574 308 L579 313 H590 V308 Z" fill="#fbbf12"/><path d="M574 324 L579 319 H590 V324 Z" fill="#ffd552"/><path d="M574 324 L579 329 H590 V324 Z" fill="#fbbf12"/><rect x="571.5" y="334.5" width="10" height="10" rx="1" fill="#fff" stroke="#111"/><rect x="574" y="339" width="5" height="2" fill="#555"/><rect x="575.5" y="336.5" width="2" height="7" fill="#111"/><rect x="587" y="333" width="15" height="14" fill="#f8c774"/><rect x="589.3" y="335" width="4" height="4" fill="#d99631"/><rect x="595.6" y="335" width="4" height="4" fill="#d99631"/><rect x="589.3" y="341" width="4" height="4" fill="#d99631"/><rect x="595.6" y="341" width="4" height="4" fill="#d99631"/><rect x="571.5" y="350.5" width="10" height="10" rx="1" fill="#fff" stroke="#111"/><rect x="574" y="355" width="5" height="2" fill="#555"/><rect x="587" y="349" width="15" height="14" fill="#f8c774"/><rect x="589.3" y="351" width="4" height="4" fill="#d99631"/><rect x="595.6" y="351" width="4" height="4" fill="#d99631"/><rect x="589.3" y="357" width="4" height="4" fill="#d99631"/><rect x="595.6" y="357" width="4" height="4" fill="#d99631"/><path d="M586 372 L591 367 H602 V372 Z" fill="#ffd552"/><path d="M586 372 L591 377 H602 V372 Z" fill="#fbbf12"/><path d="M586 388 L591 383 H602 V388 Z" fill="#ffd552"/><path d="M586 388 L591 393 H602 V388 Z" fill="#fbbf12"/><path d="M586 404 L591 399 H602 V404 Z" fill="#ffd552"/><path d="M586 404 L591 409 H602 V404 Z" fill="#fbbf12"/><path d="M586 420 L591 415 H602 V420 Z" fill="#ffd552"/><path d="M586 420 L591 425 H602 V420 Z" fill="#fbbf12"/><path d="M586 436 L591 431 H602 V436 Z" fill="#ffd552"/><path d="M586 436 L591 441 H602 V436 Z" fill="#fbbf12"/><path d="M586 452 L591 447 H602 V452 Z" fill="#ffd552"/><path d="M586 452 L591 457 H602 V452 Z" fill="#fbbf12"/><path d="M586 468 L591 463 H602 V468 Z" fill="#ffd552"/><path d="M586 468 L591 473 H602 V468 Z" fill="#fbbf12"/><path d="M586 484 L591 479 H602 V484 Z" fill="#ffd552"/><path d="M586 484 L591 489 H602 V484 Z" fill="#fbbf12"/><path d="M586 500 L591 495 H602 V500 Z" fill="#ffd552"/><path d="M586 500 L591 505 H602 V500 Z" fill="#fbbf12"/><path d="M586 516 L591 511 H602 V516 Z" fill="#ffd552"/><path d="M586 516 L591 521 H602 V516 Z" fill="#fbbf12"/><path d="M586 532 L591 527 H602 V532 Z" fill="#ffd552"/><path d="M586 532 L591 537 H602 V532 Z" fill="#fbbf12"/><path d="M586 548 L591 543 H602 V548 Z" fill="#ffd552"/><path d="M586 548 L591 553 H602 V548 Z" fill="#fbbf12"/><path d="M586 564 L591 559 H602 V564 Z" fill="#ffd552"/><path d="M586 564 L591 569 H602 V564 Z" fill="#fbbf12"/><path d="M586 580 L591 575 H602 V580 Z" fill="#ffd552"/><path d="M586 580 L591 585 H602 V580 Z" fill="#fbbf12"/><path d="M757.5 213.5 L761 209.5 L764.5 213.5 Z" fill="#c8c8c8"/><rect x="758" y="291" width="6" height="291" fill="#cdcdcd"/><path d="M758 590 L761.5 594 L765 590 Z" fill="#c8c8c8"/><path d="M539 208.5 L552 212 L539 215.5 Z" fill="#6cc690"/><path d="M539 224.5 L552 228 L539 231.5 Z" fill="#6cc690"/><path d="M539 240.5 L552 244 L539 247.5 Z" fill="#6cc690"/><path d="M539 256.5 L552 260 L539 263.5 Z" fill="#6cc690"/><path d="M539 272.5 L552 276 L539 279.5 Z" fill="#6cc690"/><path d="M539 288.5 L552 292 L539 295.5 Z" fill="#6cc690"/><path d="M540 321.5 L551 324 L540 326.5 Z" fill="#fff"/><path d="M540 337.5 L551 340 L540 342.5 Z" fill="#fff"/><path d="M540 369.5 L551 372 L540 374.5 Z" fill="#fff"/><path d="M540 385.5 L551 388 L540 390.5 Z" fill="#fff"/><path d="M540 401.5 L551 404 L540 406.5 Z" fill="#fff"/><path d="M540 417.5 L551 420 L540 422.5 Z" fill="#fff"/><path d="M540 433.5 L551 436 L540 438.5 Z" fill="#fff"/><path d="M540 449.5 L551 452 L540 454.5 Z" fill="#fff"/><path d="M540 465.5 L551 468 L540 470.5 Z" fill="#fff"/><path d="M540 481.5 L551 484 L540 486.5 Z" fill="#fff"/><path d="M540 497.5 L551 500 L540 502.5 Z" fill="#fff"/><path d="M540 513.5 L551 516 L540 518.5 Z" fill="#fff"/><path d="M540 529.5 L551 532 L540 534.5 Z" fill="#fff"/><path d="M540 545.5 L551 548 L540 550.5 Z" fill="#fff"/><path d="M540 561.5 L551 564 L540 566.5 Z" fill="#fff"/><path d="M540 577.5 L551 580 L540 582.5 Z" fill="#fff"/><rect x="770" y="209" width="12" height="6" fill="#fff"/><rect x="770.5" y="209.5" width="11" height="5" fill="none" stroke="#d4dae2" stroke-width="0.6"/><rect x="770" y="225" width="12" height="6" fill="#fff"/><rect x="770.5" y="225.5" width="11" height="5" fill="none" stroke="#d4dae2" stroke-width="0.6"/><rect x="770" y="241" width="12" height="6" fill="#fff"/><rect x="770.5" y="241.5" width="11" height="5" fill="none" stroke="#d4dae2" stroke-width="0.6"/><rect x="770" y="257" width="12" height="6" fill="#fff"/><rect x="770.5" y="257.5" width="11" height="5" fill="none" stroke="#d4dae2" stroke-width="0.6"/><rect x="770" y="273" width="12" height="6" fill="#fff"/><rect x="770.5" y="273.5" width="11" height="5" fill="none" stroke="#d4dae2" stroke-width="0.6"/><rect x="770" y="289" width="12" height="6" fill="#fff"/><rect x="770.5" y="289.5" width="11" height="5" fill="none" stroke="#d4dae2" stroke-width="0.6"/><rect x="770" y="305" width="12" height="6" fill="#fff"/><rect x="770.5" y="305.5" width="11" height="5" fill="none" stroke="#d4dae2" stroke-width="0.6"/><rect x="770" y="337" width="12" height="6" fill="#fff"/><rect x="770.5" y="337.5" width="11" height="5" fill="none" stroke="#d4dae2" stroke-width="0.6"/><rect x="770" y="353" width="12" height="6" fill="#fff"/><rect x="770.5" y="353.5" width="11" height="5" fill="none" stroke="#d4dae2" stroke-width="0.6"/><rect x="770" y="369" width="12" height="6" fill="#fff"/><rect x="770.5" y="369.5" width="11" height="5" fill="none" stroke="#d4dae2" stroke-width="0.6"/><rect x="770" y="385" width="12" height="6" fill="#fff"/><rect x="770.5" y="385.5" width="11" height="5" fill="none" stroke="#d4dae2" stroke-width="0.6"/><rect x="770" y="401" width="12" height="6" fill="#fff"/><rect x="770.5" y="401.5" width="11" height="5" fill="none" stroke="#d4dae2" stroke-width="0.6"/><rect x="770" y="417" width="12" height="6" fill="#fff"/><rect x="770.5" y="417.5" width="11" height="5" fill="none" stroke="#d4dae2" stroke-width="0.6"/><rect x="770" y="433" width="12" height="6" fill="#fff"/><rect x="770.5" y="433.5" width="11" height="5" fill="none" stroke="#d4dae2" stroke-width="0.6"/><rect x="770" y="449" width="12" height="6" fill="#fff"/><rect x="770.5" y="449.5" width="11" height="5" fill="none" stroke="#d4dae2" stroke-width="0.6"/><rect x="770" y="465" width="12" height="6" fill="#fff"/><rect x="770.5" y="465.5" width="11" height="5" fill="none" stroke="#d4dae2" stroke-width="0.6"/><rect x="770" y="481" width="12" height="6" fill="#fff"/><rect x="770.5" y="481.5" width="11" height="5" fill="none" stroke="#d4dae2" stroke-width="0.6"/><rect x="770" y="497" width="12" height="6" fill="#fff"/><rect x="770.5" y="497.5" width="11" height="5" fill="none" stroke="#d4dae2" stroke-width="0.6"/><rect x="770" y="513" width="12" height="6" fill="#fff"/><rect x="770.5" y="513.5" width="11" height="5" fill="none" stroke="#d4dae2" stroke-width="0.6"/><rect x="770" y="529" width="12" height="6" fill="#fff"/><rect x="770.5" y="529.5" width="11" height="5" fill="none" stroke="#d4dae2" stroke-width="0.6"/><rect x="770" y="545" width="12" height="6" fill="#fff"/><rect x="770.5" y="545.5" width="11" height="5" fill="none" stroke="#d4dae2" stroke-width="0.6"/><rect x="770" y="561" width="12" height="6" fill="#fff"/><rect x="770.5" y="561.5" width="11" height="5" fill="none" stroke="#d4dae2" stroke-width="0.6"/><rect x="770" y="577" width="12" height="6" fill="#fff"/><rect x="770.5" y="577.5" width="11" height="5" fill="none" stroke="#d4dae2" stroke-width="0.6"/></svg>
<div class="f fb" style="left:271px;top:243px">SampleData</div>
<div class="f" style="left:270px;top:259px">CustomerID</div>
<div class="f" style="left:270px;top:275px">CompanyName</div>
<div class="f" style="left:270px;top:291px">ContactName</div>
<div class="f" style="left:270px;top:307px">ContactTitle</div>
<div class="f" style="left:270px;top:323px">Address</div>
<div class="f" style="left:270px;top:339px">City</div>
<div class="f" style="left:270px;top:355px">Region</div>
<div class="f" style="left:270px;top:371px">PostalCode</div>
<div class="f" style="left:270px;top:387px">Country</div>
<div class="f" style="left:270px;top:403px">Phone</div>
<div class="f" style="left:270px;top:419px">Fax</div>
<div class="f fb" style="left:282px;top:435px">Orders</div>
<div class="f" style="left:282px;top:451px">OrderID</div>
<div class="f" style="left:282px;top:467px">CustomerID</div>
<div class="f" style="left:282px;top:483px">EmployeeID</div>
<div class="f" style="left:282px;top:499px">OrderDate</div>
<div class="f" style="left:282px;top:515px">RequiredDate</div>
<div class="f" style="left:282px;top:531px">ShippedDate</div>
<div class="f" style="left:282px;top:547px">ShipVia</div>
<div class="f" style="left:282px;top:563px">Freight</div>
<div class="f" style="left:282px;top:579px">ShipName</div>
<div class="f" style="left:282px;top:595px">ShipAddress</div>
<div class="f" style="left:282px;top:611px">ShipCity</div>
<div class="f" style="left:282px;top:627px">ShipRegion</div>
<div class="f" style="left:282px;top:643px">ShipPostalCode</div>
<div class="f" style="left:282px;top:659px">ShipCountry</div>
<div class="a" style="left:262px;top:217px;font-size:13px;font-weight:bold;color:#fff;line-height:16px;transform-origin:0 3.6px;transform:scaleY(1.1)">SampleData</div>
<div class="a" style="left:584px;top:178px;font-size:13px;font-weight:bold;color:#fff;line-height:16px;transform-origin:0 3.6px;transform:scaleY(1.1)">PassthruTranformation</div>
<div class="f" style="left:593px;top:204px">City</div>
<div class="f" style="left:593px;top:220px">Region</div>
<div class="f" style="left:593px;top:236px">PostalCode</div>
<div class="f" style="left:593px;top:252px">Country</div>
<div class="f" style="left:593px;top:268px">Phone</div>
<div class="f" style="left:593px;top:284px">Fax</div>
<div class="f" style="left:593px;top:300px">LateOrders</div>
<div class="f" style="left:593px;top:316px">&lt;New Member&gt;</div>
<div class="f fb" style="left:605px;top:332px">Orders</div>
<div class="f fb" style="left:605px;top:348px">Orders_LateArrivals</div>
<div class="f" style="left:605px;top:364px">OrderID</div>
<div class="f" style="left:605px;top:380px">CustomerID</div>
<div class="f" style="left:605px;top:396px">EmployeeID</div>
<div class="f" style="left:605px;top:412px">OrderDate</div>
<div class="f" style="left:605px;top:428px">RequiredDate</div>
<div class="f" style="left:605px;top:444px">ShippedDate</div>
<div class="f" style="left:605px;top:460px">ShipVia</div>
<div class="f" style="left:605px;top:476px">Freight</div>
<div class="f" style="left:605px;top:492px">ShipName</div>
<div class="f" style="left:605px;top:508px">ShipAddress</div>
<div class="f" style="left:605px;top:524px">ShipCity</div>
<div class="f" style="left:605px;top:540px">ShipRegion</div>
<div class="f" style="left:605px;top:556px">ShipPostalCode</div>
<div class="f" style="left:605px;top:572px">ShipCountry</div>
</div></div>
<div class="a" style="left:1311px;top:151px;width:1px;height:594px;background:#fff"></div>
<div class="a" style="left:200px;top:728px;width:1112px;height:1px;background:#fff"></div>
<div class="a" style="left:1312px;top:151px;width:16px;height:577px;background:#f0f0f0"></div>
<div class="a" style="left:1312px;top:170px;width:15px;height:476px;background:#cdcdcd"></div>
<svg style="left:1315px;top:156px" width="10" height="7"><path d="M1 5.5L5 1.5L9 5.5" stroke="#505050" stroke-width="2" fill="none"/></svg>
<svg style="left:1315px;top:715px" width="10" height="7"><path d="M1 1.5L5 5.5L9 1.5" stroke="#505050" stroke-width="2" fill="none"/></svg>
<div class="a" style="left:200px;top:729px;width:1111px;height:16px;background:#f0f0f0"></div>
<div class="a" style="left:217px;top:729px;width:684px;height:15px;background:#cdcdcd"></div>
<svg style="left:204px;top:732px" width="8" height="10"><path d="M6 1L2 5L6 9" stroke="#505050" stroke-width="2" fill="none"/></svg>
<svg style="left:1299px;top:732px" width="8" height="10"><path d="M2 1L6 5L2 9" stroke="#505050" stroke-width="2" fill="none"/></svg>
<div class="a" style="left:1312px;top:729px;width:16px;height:16px;background:#fff"></div>
<div class="a" style="left:200px;top:745px;width:1128px;height:1px;background:#d5dde7"></div>
<div class="a" style="left:1328px;top:151px;width:1px;height:595px;background:#d9e0ea"></div>
<div class="a" style="left:1354px;top:78px;width:6px;height:83px;background:#c6c6c6"></div>
<div class="a" style="left:1354px;top:174px;width:6px;height:79px;background:#c6c6c6"></div>
<div class="a" style="left:1336px;top:79px;width:14px;height:90px"><div style="position:absolute;left:0;top:0;transform-origin:0 0;transform:translate(14px,0) rotate(90deg);white-space:nowrap;font-size:11.4px;line-height:14px;color:#2a2a2a">Project Explorer</div></div>
<div class="a" style="left:1336px;top:175px;width:14px;height:90px"><div style="position:absolute;left:0;top:0;transform-origin:0 0;transform:translate(14px,0) rotate(90deg);white-space:nowrap;font-size:11.2px;line-height:14px;color:#2a2a2a">Server Explorer</div></div>
<div class="a" style="left:0;top:750px;width:1360px;height:2px;background:#2e3036"></div>
<div class="a" style="left:48px;top:750px;width:344px;height:2px;background:#e8ecf1"></div>
<div class="a" style="left:1082px;top:750px;width:17px;height:2px;background:#e8ecf1"></div>
<svg style="left:986px;top:418px" width="13" height="20"><path d="M0.5 0.5V16.5L4.3 12.8L7.2 18.8L9.6 17.7L6.8 11.9H11.8Z" fill="#fff" stroke="#000" stroke-width="1" stroke-linejoin="miter"/></svg>
</body></html>
